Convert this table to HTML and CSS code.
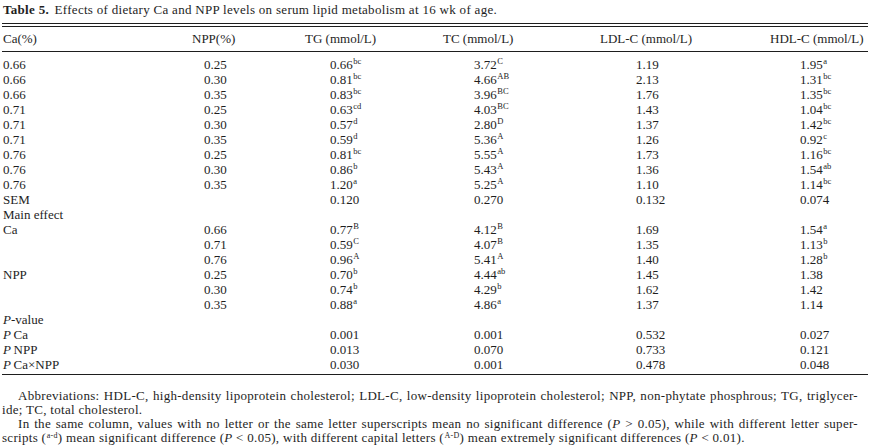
FILE: index.html
```html
<!DOCTYPE html>
<html>
<head>
<meta charset="utf-8">
<link rel="stylesheet" href="styles.css">
</head>
<body>
<div class="page">
  <div class="caption"><b>Table 5.</b> Effects of dietary Ca and NPP levels on serum lipid metabolism at 16 wk of age.</div>
  <table class="data">
    <colgroup>
      <col class="c1"><col class="c2"><col class="c3"><col class="c4"><col class="c5"><col class="c6">
    </colgroup>
    <thead>
      <tr>
        <th class="h1">Ca(%)</th>
        <th class="h2">NPP(%)</th>
        <th class="h3">TG (mmol/L)</th>
        <th class="h4">TC (mmol/L)</th>
        <th class="h5">LDL-C (mmol/L)</th>
        <th class="h6">HDL-C (mmol/L)</th>
      </tr>
    </thead>
    <tbody>
      <tr class="first"><td>0.66</td><td>0.25</td><td>0.66<sup>bc</sup></td><td>3.72<sup>C</sup></td><td>1.19</td><td>1.95<sup>a</sup></td></tr>
      <tr><td>0.66</td><td>0.30</td><td>0.81<sup>bc</sup></td><td>4.66<sup>AB</sup></td><td>2.13</td><td>1.31<sup>bc</sup></td></tr>
      <tr><td>0.66</td><td>0.35</td><td>0.83<sup>bc</sup></td><td>3.96<sup>BC</sup></td><td>1.76</td><td>1.35<sup>bc</sup></td></tr>
      <tr><td>0.71</td><td>0.25</td><td>0.63<sup>cd</sup></td><td>4.03<sup>BC</sup></td><td>1.43</td><td>1.04<sup>bc</sup></td></tr>
      <tr><td>0.71</td><td>0.30</td><td>0.57<sup>d</sup></td><td>2.80<sup>D</sup></td><td>1.37</td><td>1.42<sup>bc</sup></td></tr>
      <tr><td>0.71</td><td>0.35</td><td>0.59<sup>d</sup></td><td>5.36<sup>A</sup></td><td>1.26</td><td>0.92<sup>c</sup></td></tr>
      <tr><td>0.76</td><td>0.25</td><td>0.81<sup>bc</sup></td><td>5.55<sup>A</sup></td><td>1.73</td><td>1.16<sup>bc</sup></td></tr>
      <tr><td>0.76</td><td>0.30</td><td>0.86<sup>b</sup></td><td>5.43<sup>A</sup></td><td>1.36</td><td>1.54<sup>ab</sup></td></tr>
      <tr><td>0.76</td><td>0.35</td><td>1.20<sup>a</sup></td><td>5.25<sup>A</sup></td><td>1.10</td><td>1.14<sup>bc</sup></td></tr>
      <tr><td>SEM</td><td></td><td>0.120</td><td>0.270</td><td>0.132</td><td>0.074</td></tr>
      <tr><td>Main effect</td><td></td><td></td><td></td><td></td><td></td></tr>
      <tr><td>Ca</td><td>0.66</td><td>0.77<sup>B</sup></td><td>4.12<sup>B</sup></td><td>1.69</td><td>1.54<sup>a</sup></td></tr>
      <tr><td></td><td>0.71</td><td>0.59<sup>C</sup></td><td>4.07<sup>B</sup></td><td>1.35</td><td>1.13<sup>b</sup></td></tr>
      <tr><td></td><td>0.76</td><td>0.96<sup>A</sup></td><td>5.41<sup>A</sup></td><td>1.40</td><td>1.28<sup>b</sup></td></tr>
      <tr><td>NPP</td><td>0.25</td><td>0.70<sup>b</sup></td><td>4.44<sup>ab</sup></td><td>1.45</td><td>1.38</td></tr>
      <tr><td></td><td>0.30</td><td>0.74<sup>b</sup></td><td>4.29<sup>b</sup></td><td>1.62</td><td>1.42</td></tr>
      <tr><td></td><td>0.35</td><td>0.88<sup>a</sup></td><td>4.86<sup>a</sup></td><td>1.37</td><td>1.14</td></tr>
      <tr><td><i>P</i>-value</td><td></td><td></td><td></td><td></td><td></td></tr>
      <tr><td><i>P</i>&#8201;Ca</td><td></td><td>0.001</td><td>0.001</td><td>0.532</td><td>0.027</td></tr>
      <tr><td><i>P</i>&#8201;NPP</td><td></td><td>0.013</td><td>0.070</td><td>0.733</td><td>0.121</td></tr>
      <tr class="last"><td><i>P</i>&#8201;Ca×NPP</td><td></td><td>0.030</td><td>0.001</td><td>0.478</td><td>0.048</td></tr>
    </tbody>
  </table>
  <div class="notes">
    <p class="note"><span class="jl indent">Abbreviations: HDL-C, high-density lipoprotein cholesterol; LDL-C, low-density lipoprotein cholesterol; NPP, non-phytate phosphrous; TG, triglycer-</span><span class="ll">ide; TC, total cholesterol.</span></p>
    <p class="note"><span class="jl indent">In the same column, values with no letter or the same letter superscripts mean no significant difference (<i>P</i> &gt; 0.05), while with different letter super-</span><span class="ll">scripts (<sup>a-d</sup>) mean significant difference (<i>P</i> &lt; 0.05), with different capital letters (<sup>A-D</sup>) mean extremely significant differences (<i>P</i> &lt; 0.01).</span></p>
  </div>
</div>
</body>
</html>
```

FILE: styles.css
```css
html, body {
  margin: 0;
  padding: 0;
  background: #ffffff;
}
.page {
  padding: 3px 3px 0 2px;
  font-family: "Liberation Serif", "Times New Roman", serif;
  font-size: 13px;
  color: #1e1e1e;
}
.caption {
  line-height: 14px;
  height: 14px;
  padding-left: 1px;
  letter-spacing: 0.3px;
}
.caption b {
  font-weight: bold;
  margin-right: 2px;
}
.data {
  margin-top: 6px;
  width: 100%;
  border-collapse: collapse;
  table-layout: fixed;
  border-top: 4px double #1e1e1e;
  border-bottom: 1.5px solid #1e1e1e;
}
.c1 { width: 202px; }
.c2 { width: 126px; }
.c3 { width: 144px; }
.c4 { width: 162px; }
.c5 { width: 164px; }
.c6 { width: auto; }
th {
  font-weight: normal;
  text-align: left;
  height: 24px;
  padding: 0;
  vertical-align: middle;
  border-bottom: 1px solid #1e1e1e;
  white-space: nowrap;
}
.h1 { padding-left: 1px; }
.h2 { transform: translateX(-12px); }
.h3 { transform: translateX(-25px); }
.h4 { transform: translateX(-31px); }
.h5 { transform: translateX(-36px); }
.h6 { transform: translateX(-30px); }
td {
  padding: 0;
  height: 15px;
  line-height: 15px;
  white-space: nowrap;
}
td:first-child { padding-left: 1px; }
tr.first td { padding-top: 5px; }
tr.last td { padding-bottom: 2px; }
sup {
  font-size: 8.5px;
  line-height: 0;
  vertical-align: 5px;
  margin-left: 0.5px;
}
.notes {
  padding-top: 14px;
  padding-right: 10px;
  letter-spacing: 0.3px;
}
.note {
  margin: 0;
  line-height: 14px;
}
.note span {
  display: block;
}
.jl {
  text-align: justify;
  text-align-last: justify;
}
.indent {
  padding-left: 16px;
}
.note sup {
  font-size: 8px;
  vertical-align: 4px;
}
```
